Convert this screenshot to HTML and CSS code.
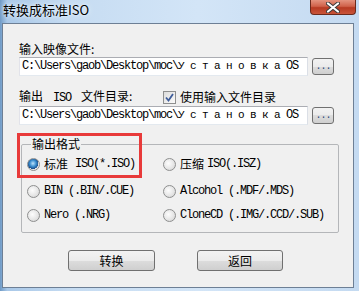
FILE: index.html
```html
<!DOCTYPE html>
<html lang="zh-CN">
<head>
    <meta charset="UTF-8">
    <title>转换成标准ISO</title>
    <link rel="stylesheet" href="styles.css">
</head>
<body>
    <div class="window">
        <div class="titlebar">
            <span class="title">转换成标准ISO</span>
            <div class="close">
                <svg width="14" height="11" viewBox="0 0 14 11">
                    <path d="M2 1.5 L12 9.5 M12 1.5 L2 9.5" stroke="#3a3a3a" stroke-width="4" stroke-linecap="round"/>
                    <path d="M2 1.5 L12 9.5 M12 1.5 L2 9.5" stroke="#ffffff" stroke-width="2.2" stroke-linecap="round"/>
                </svg>
            </div>
        </div>
        <div class="client">
            <div class="label">输入映像文件:</div>
            <div class="path-row">
                <div class="field">C:\Users\gaob\Desktop\moc\<span class="ru">Установка</span>OS</div>
                <button class="browse">...</button>
            </div>
            <div class="label-row">
                <span class="label">输出<span class="en spaced">ISO</span>文件目录:</span>
                <span class="check"><span class="box">
                    <svg width="9" height="9" viewBox="0 0 9 9"><path d="M1 4.5 L3.5 7.5 L8 1" fill="none" stroke="#3f5d9a" stroke-width="1.8"/></svg>
                </span>使用输入文件目录</span>
            </div>
            <div class="path-row">
                <div class="field">C:\Users\gaob\Desktop\moc\<span class="ru">Установка</span>OS</div>
                <button class="browse">...</button>
            </div>

            <fieldset class="format">
                <legend>输出格式</legend>
                <div class="options">
                    <div class="option"><span class="radio on"></span>标准<span class="en wide">ISO(*.ISO)</span></div>
                    <div class="option"><span class="radio"></span>压缩<span class="en narrow">ISO(.ISZ)</span></div>
                    <div class="option"><span class="radio"></span><span class="en">BIN (.BIN/.CUE)</span></div>
                    <div class="option"><span class="radio"></span><span class="en">Alcohol (.MDF/.MDS)</span></div>
                    <div class="option"><span class="radio"></span><span class="en">Nero (.NRG)</span></div>
                    <div class="option"><span class="radio"></span><span class="en">CloneCD (.IMG/.CCD/.SUB)</span></div>
                </div>
            </fieldset>

            <div class="actions">
                <button class="button">转换</button>
                <button class="button back">返回</button>
            </div>

            <!-- annotation box drawn over the screenshot -->
            <div class="mark"></div>
        </div>
    </div>
</body>
</html>
```

FILE: styles.css
```css
body {
    margin: 0;
    font-family: "Noto Sans CJK SC", sans-serif;
    font-size: 12px;
    line-height: 16px;
    color: #000;
}
.window {
    width: 359px;
    height: 291px;
    box-sizing: border-box;
    padding: 0 5px 3px 2px;
    display: flex;
    flex-direction: column;
    overflow: hidden;
    background: linear-gradient(90deg, #6f9ac6 0, #a9c8e8 2%, #c6dcf2 20%, #d3e5f7 55%, #c4daf1 100%);
}
.titlebar {
    height: 23px;
    display: flex;
    align-items: flex-start;
    padding-left: 1px;
}
.title {
    font-size: 13px;
    line-height: 19px;
    text-shadow: 0 0 6px #eaf3fc, 0 0 3px #eaf3fc;
}
.close {
    margin-left: auto;
    margin-right: -2px;
    width: 46px;
    height: 15px;
    box-sizing: border-box;
    border: 1px solid #6b2a1c;
    border-top: none;
    border-radius: 0 0 4px 4px;
    background: linear-gradient(#e4937f 0, #d0624a 45%, #b73a22 55%, #c9553a 100%);
    display: flex;
    align-items: center;
    justify-content: center;
}
.client {
    flex: 1;
    position: relative;
    border: 1px solid #6d7f95;
    background: #f0f0f0;
    padding: 17px 0 0 16px;
}
.label-row {
    display: flex;
    margin-top: 12px;
}
.label-row .label {
    width: 144px;
    flex-shrink: 0;
}
.en {
    font-family: "Liberation Mono", monospace;
    font-size: 12px;
    letter-spacing: -1.2px;
}
.spaced {
    margin: 0 10px 0 10px;
}
.wide {
    margin-left: 7px;
}
.narrow {
    margin-left: 3px;
}
.path-row {
    display: flex;
}
.field {
    width: 289px;
    height: 19px;
    box-sizing: border-box;
    border: 1px solid;
    border-color: #abadb3 #dbdfe6 #e3e9ef #e2e3ea;
    background: #fff;
    padding: 0 2px;
    line-height: 17px;
    font-family: "Liberation Mono", monospace;
    font-size: 12px;
    letter-spacing: -1.2px;
    white-space: nowrap;
    overflow: hidden;
}
.ru {
    font-size: 11px;
    letter-spacing: 5.4px;
}
.browse {
    width: 22px;
    height: 17px;
    margin: 1px 0 0 4px;
    padding: 0;
    border: 1px solid #707070;
    border-radius: 3px;
    background: linear-gradient(#f2f2f2 0, #ebebeb 50%, #dddddd 50%, #cfcfcf 100%);
    font-family: "Liberation Mono", monospace;
    font-size: 10px;
    line-height: 12px;
    color: #2a4a7a;
    letter-spacing: -1px;
}
.check {
    display: flex;
    align-items: center;
    gap: 4px;
}
.box {
    width: 13px;
    height: 13px;
    box-sizing: border-box;
    border: 1px solid #8e8f8f;
    background: linear-gradient(135deg, #dcdcdc, #fbfbfb);
    display: flex;
    align-items: center;
    justify-content: center;
}
.format {
    margin: 11px 0 0 2px;
    width: 318px;
    box-sizing: border-box;
    padding: 4px 0 9px 5px;
    border: 1px solid #b4b6b9;
    border-radius: 2px;
}
.format legend {
    margin-left: 4px;
    padding: 0 1px;
    line-height: 16px;
}
.options {
    display: grid;
    grid-template-columns: 136px auto;
    grid-template-rows: 27px 24px 16px;
}
.option {
    display: flex;
    align-items: center;
    height: 16px;
    white-space: pre;
}
.radio {
    width: 13px;
    height: 13px;
    box-sizing: border-box;
    margin-right: 4px;
    border: 1px solid #8e8f8f;
    border-radius: 50%;
    background: radial-gradient(circle at 40% 40%, #fdfdfd 0, #e6e6e6 55%, #cfcfcf 100%);
}
.radio.on {
    background: radial-gradient(circle at 45% 40%, #bfe3fb 0, #3b8fd0 35%, #1b4f8c 60%, #e4e4e4 62%, #f6f6f6 100%);
}
.actions {
    display: flex;
    gap: 42px;
    margin: 17px 0 0 49px;
}
.button {
    width: 87px;
    height: 21px;
    padding: 0;
    border: 1px solid #707070;
    border-radius: 3px;
    background: linear-gradient(#f2f2f2 0, #ebebeb 50%, #dddddd 50%, #cfcfcf 100%);
    font-family: "Noto Sans CJK SC", sans-serif;
    font-size: 12px;
    line-height: 16px;
    color: #000;
}
.button.back {
    width: 86px;
}
.mark {
    position: absolute;
    left: 14px;
    top: 109px;
    width: 119px;
    height: 39px;
    border: 3px solid #e83a3a;
}
```
